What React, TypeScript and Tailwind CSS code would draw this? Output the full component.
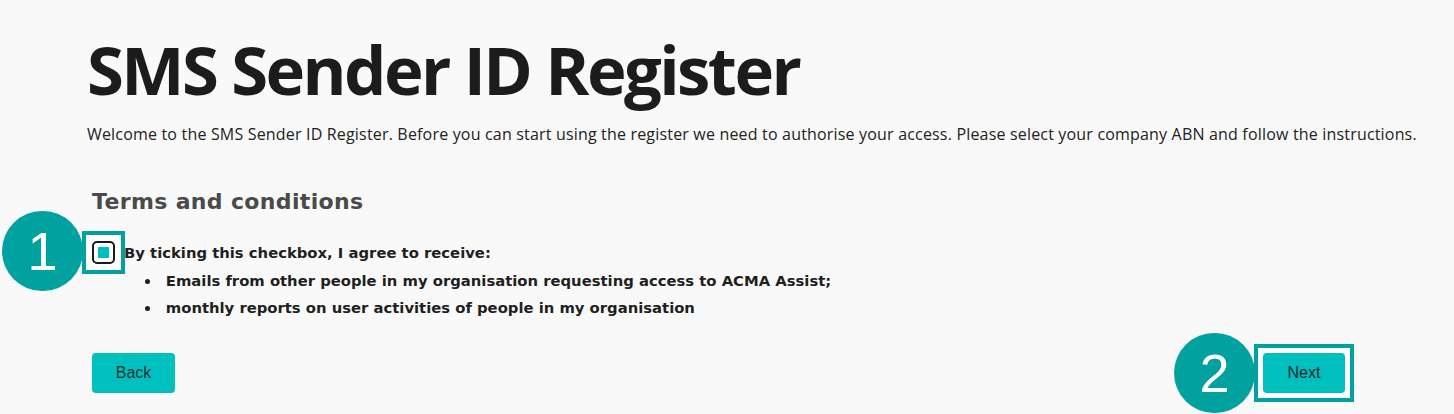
import React from 'react';

const Callout: React.FC<{ n: string; className: string }> = ({ n, className }) => (
    <div
        className={`absolute w-[81px] h-[80px] rounded-full bg-[#00a19f] text-white flex items-center justify-center text-[54px] leading-none font-['Liberation_Sans',sans-serif] ${className}`}
    >
        {n}
    </div>
);

export default function App() {
    return (
        <div className="relative min-h-[414px] bg-[#f9f9f9] text-[#1b1b1b] overflow-hidden">
            <div className="pl-[87px] pr-[36px] pt-[29px]">
                <h1 className="font-['Open_Sans',sans-serif] font-bold text-[67px] leading-[80px] tracking-[-2.55px] text-[#1c1c1c]">
                    SMS Sender ID Register
                </h1>
                <p className="mt-[15px] font-['Open_Sans',sans-serif] text-[16px] leading-[20px] tracking-[0.18px] text-[#222]">
                    Welcome to the SMS Sender ID Register. Before you can start using the register we need to authorise your access. Please select your company ABN and follow the instructions.
                </p>

                <div className="pl-[5px] mt-[44px] font-['DejaVu_Sans',sans-serif]">
                    <h2 className="font-bold text-[22px] leading-[28px] tracking-[0.35px] text-[#4a4a4a]">Terms and conditions</h2>

                    <div className="mt-[15px] flex items-start">
                        <div className="-ml-[10px] p-[6px] border-[4px] border-[#00a19f] bg-white">
                            <div className="w-[23px] h-[23px] rounded-[5px] border-[2px] border-[#1a1a1a] flex items-center justify-center">
                                <div className="w-[11px] h-[11px] bg-[#00bfbf]" />
                            </div>
                        </div>
                        <div className="pt-[12px] font-bold text-[14.8px] leading-[27px] text-[#1f1f1f]">
                            <p className="-ml-[1px] leading-[20px]">By ticking this checkbox, I agree to receive:</p>
                            <ul className="mt-[4px] pl-[20px] list-disc list-inside">
                                <li>Emails from other people in my organisation requesting access to ACMA Assist;</li>
                                <li>monthly reports on user activities of people in my organisation</li>
                            </ul>
                        </div>
                    </div>
                </div>

                <div className="pl-[5px] mt-[23px] flex items-center justify-between pr-[64px]">
                    <button className="w-[83px] h-[40px] rounded-[4px] bg-[#00bfbf] text-[#1a3434] text-[16px] font-['Liberation_Sans',sans-serif]">
                        Back
                    </button>
                    <div className="p-[5px] border-[4px] border-[#00a19f] bg-white">
                        <button className="w-[82px] h-[40px] rounded-[4px] bg-[#00bfbf] text-[#102828] text-[16px] font-['Liberation_Sans',sans-serif]">
                            Next
                        </button>
                    </div>
                </div>
            </div>

            <Callout n="1" className="left-[2px] top-[211px]" />
            <Callout n="2" className="left-[1174px] top-[333px]" />
        </div>
    );
}
